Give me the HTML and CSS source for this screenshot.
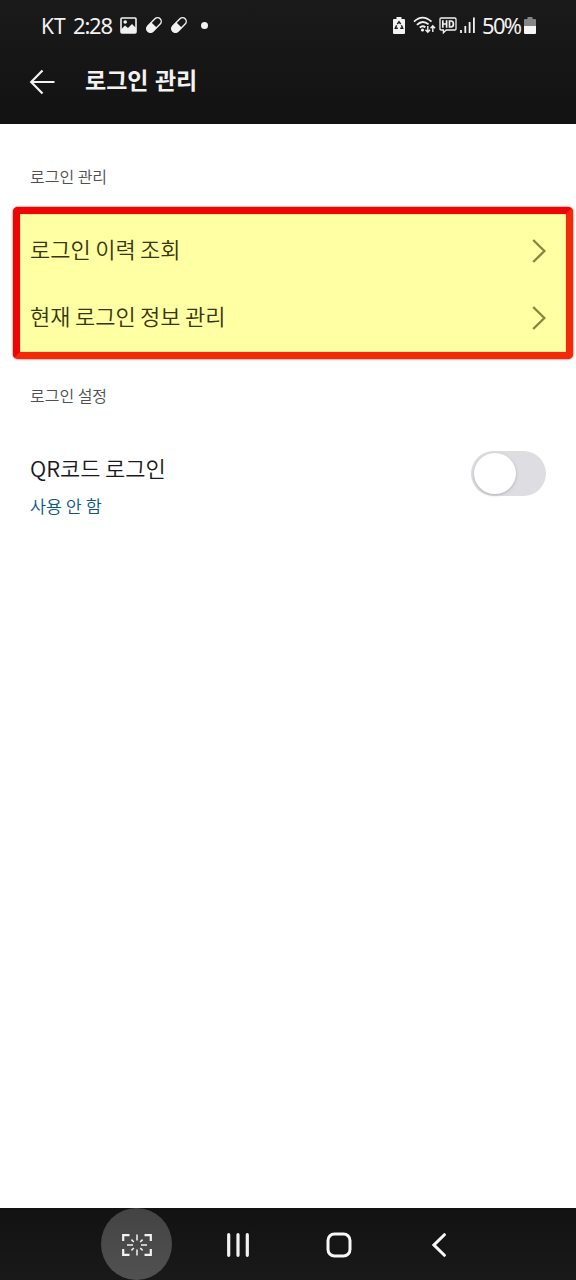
FILE: index.html
```html
<!DOCTYPE html>
<html lang="ko">
<head>
<meta charset="utf-8">
<title>로그인 관리</title>
<link rel="stylesheet" href="styles.css">
</head>
<body>
<div class="screen">
  <header class="top">
    <div class="status">
      <span class="carrier">KT</span>
      <span class="clock">2:28</span>
      <svg class="i-photo" width="17" height="17" viewBox="0 0 17 17"><rect x="1" y="1" width="15" height="15" rx="1" fill="none" stroke="#f2f2f2" stroke-width="1.6"/><path d="M1 12.5L5 8.5L8 11L12 7L16 11V16H1Z" fill="#f2f2f2"/><circle cx="5.2" cy="5" r="1.8" fill="#f2f2f2"/></svg>
      <svg class="i-pill" width="18" height="18" viewBox="0 0 18 18"><g transform="rotate(-45 9 9)"><rect x="0.3" y="5.3" width="17.4" height="7.4" rx="3.7" fill="none" stroke="#f2f2f2" stroke-width="1.4"/><path d="M9 5H4A4 4 0 0 0 4 13H9Z" fill="#f2f2f2"/></g></svg>
      <svg class="i-pill second" width="18" height="18" viewBox="0 0 18 18"><g transform="rotate(-45 9 9)"><rect x="0.3" y="5.3" width="17.4" height="7.4" rx="3.7" fill="none" stroke="#f2f2f2" stroke-width="1.4"/><path d="M9 5H4A4 4 0 0 0 4 13H9Z" fill="#f2f2f2"/></g></svg>
      <span class="dot"></span>
      <svg class="i-eco" width="12" height="17" viewBox="0 0 12 17"><path d="M3.5 0H8.5V2H11Q12 2 12 3V16Q12 17 11 17H1Q0 17 0 16V3Q0 2 1 2H3.5Z" fill="#f2f2f2"/><path d="M4.3 7.2L6 4.8L7.7 7.2M8.4 8.3L9.7 11.3H7.2M4.8 11.3H2.3L3.6 8.3" fill="none" stroke="#191919" stroke-width="1.4"/></svg>
      <svg class="i-wifi" width="23" height="18" viewBox="0 0 23 18"><g fill="none" stroke="#f2f2f2" stroke-width="1.8"><path d="M1 5.6Q9.5 -2.4 18.5 5.6"/><path d="M3.9 8.8Q9.5 3.4 15.6 8.4"/><path d="M6.8 11.6Q9.5 9 12.4 11.2"/></g><circle cx="9.5" cy="14" r="1.6" fill="#f2f2f2"/><path d="M14.8 10V16M12.5 13.8L14.8 16.2L17.1 13.8M19.8 16V10M17.6 12.2L19.8 9.8L22 12.2" fill="none" stroke="#f2f2f2" stroke-width="1.4"/></svg>
      <svg class="i-hd" width="18" height="17" viewBox="0 0 18 17"><path d="M2.2 1H15.8Q17 1 17 2.2V12Q17 13 15.8 13H7.2L4.4 15.8V13H2.2Q1 13 1 12V2.2Q1 1 2.2 1Z" fill="none" stroke="#f2f2f2" stroke-width="1.3"/><path d="M3.8 3.2V10.8M7.6 3.2V10.8M3.8 7H7.6M10.5 4V10H12Q14.4 10 14.4 7Q14.4 4 12 4Z" fill="none" stroke="#f2f2f2" stroke-width="1.7"/></svg>
      <svg class="i-signal" width="15" height="16" viewBox="0 0 15 16"><path d="M1 13V16M5.3 9V16M9.6 5V16M13.9 .6V16" fill="none" stroke="#f2f2f2" stroke-width="1.8"/></svg>
      <span class="percent">50%</span>
      <svg class="i-battery" width="12" height="17" viewBox="0 0 12 17"><path d="M3.5 0H8.5V2H11Q12 2 12 3V9H0V3Q0 2 1 2H3.5Z" fill="#858585"/><path d="M0 9H12V16Q12 17 11 17H1Q0 17 0 16Z" fill="#f6f6f6"/></svg>
    </div>
    <div class="appbar">
      <svg class="back" width="26" height="26" viewBox="0 0 26 26"><path d="M13.5 1.5L2.2 13L13.5 24.5M2.5 13H25.5" fill="none" stroke="#f2f2f2" stroke-width="2.2"/></svg>
      <h1 class="title">로그인 관리</h1>
    </div>
  </header>
  <main class="content">
    <h2 class="label">로그인 관리</h2>
    <div class="highlight">
      <div class="row"><span class="row-text">로그인 이력 조회</span><svg width="14" height="24" viewBox="0 0 14 24"><path d="M1.2 1L12.4 12L1.2 23" fill="none" stroke="#87873c" stroke-width="2.4"/></svg></div>
      <div class="row"><span class="row-text">현재 로그인 정보 관리</span><svg width="14" height="24" viewBox="0 0 14 24"><path d="M1.2 1L12.4 12L1.2 23" fill="none" stroke="#87873c" stroke-width="2.4"/></svg></div>
    </div>
    <h2 class="label settings">로그인 설정</h2>
    <div class="qr">
      <div>
        <div class="qr-name">QR코드 로그인</div>
        <div class="qr-state">사용 안 함</div>
      </div>
      <div class="toggle"><div class="knob"></div></div>
    </div>
  </main>
  <nav class="nav">
    <div class="capture"><svg width="30" height="22" viewBox="0 0 30 22"><path d="M1.2 7V1.2H7.5M22.5 1.2H28.8V7M28.8 15V20.8H22.5M7.5 20.8H1.2V15" fill="none" stroke="#f2f2f2" stroke-width="2.2"/><path d="M15 .5V6.5M15 15.5V21.5M5 11H11M19 11H25M9.4 5.6L11.8 8M20.6 5.6L18.2 8M9.4 16.4L11.8 14M20.6 16.4L18.2 14" fill="none" stroke="#f2f2f2" stroke-width="1.5"/></svg></div>
    <svg class="recents" width="22" height="24" viewBox="0 0 22 24"><path d="M1.7 1.7V22.3M11 1.7V22.3M20.3 1.7V22.3" stroke="#f2f2f2" stroke-width="3.2" stroke-linecap="round"/></svg>
    <svg class="home" width="26" height="26" viewBox="0 0 26 26"><rect x="2" y="2" width="22" height="22" rx="6.5" fill="none" stroke="#f7f7f7" stroke-width="3"/></svg>
    <svg class="nav-back" width="14" height="24" viewBox="0 0 14 24"><path d="M12.4 1.7L2 12L12.4 22.3" fill="none" stroke="#f7f7f7" stroke-width="3" stroke-linecap="round"/></svg>
  </nav>
</div>
</body>
</html>
```
FILE: styles.css
```css
* { box-sizing: border-box; }
body { margin: 0; background: #fff; font-family: "Noto Sans CJK KR", sans-serif; }
svg { display: block; flex: none; }
.screen { width: 576px; height: 1280px; display: flex; flex-direction: column; overflow: hidden; }
.top { height: 124px; flex: none; background: linear-gradient(#1a1a1a, #121212); color: #f2f2f2; }
.status { height: 50px; display: flex; align-items: center; padding-left: 41px; white-space: nowrap; font: 22px/50px "Noto Sans", sans-serif; }
.carrier { width: 32px; font-size: 21px; padding-top: 1px; }
.clock { width: 48px; letter-spacing: -1.2px; }
.i-photo { margin-left: -1px; }
.i-pill { margin-left: 8px; }
.i-pill.second { margin-left: 7px; }
.dot { width: 7px; height: 7px; margin-left: 13px; border-radius: 50%; background: #f2f2f2; }
.i-eco { margin-left: 185px; }
.i-wifi { margin-left: 8px; }
.i-hd { margin-left: 3px; }
.i-signal { margin-left: 3px; }
.percent { width: 42px; margin-left: 7px; letter-spacing: -1.7px; }
.appbar { height: 62px; display: flex; align-items: center; padding-left: 29px; }
.back { margin-top: 1px; }
.title { margin: -5px 0 0 30px; font-size: 23px; font-weight: 700; line-height: 34px; }
.content { flex: 1; padding: 40px 3px 0 13px; }
.label { margin: 0; padding-left: 17px; font-size: 16px; line-height: 24px; font-weight: 350; word-spacing: -1px; color: #505050; }
.highlight { height: 152px; margin-top: 19px; padding-top: 3px; border: 7px solid #f32a09; border-top-color: #ee0505; border-left-color: #ee0505; border-radius: 5px; background: #ffffa4; box-shadow: inset 0 0 1px #b33, 0 0 2px #b00000; }
.row { height: 67px; display: flex; align-items: center; justify-content: space-between; padding: 0 20px 0 10px; font-size: 22px; font-weight: 350; color: #36360c; }
.row-text { padding-bottom: 5px; word-spacing: -1.7px; }
.label.settings { margin-top: 24px; }
.qr { display: flex; justify-content: space-between; margin-top: 44px; padding: 0 27px 0 17px; }
.qr-name { margin-top: -2px; font-size: 22px; line-height: 36px; font-weight: 350; word-spacing: -1.7px; color: #1a1a1a; }
.qr-state { margin-top: 8px; font-size: 17.4px; line-height: 26px; font-weight: 350; word-spacing: -1px; color: #0c5687; }
.toggle { width: 75px; height: 45px; padding: 2px 3px; border-radius: 23px; background: #dedde2; }
.knob { width: 42px; height: 41px; border-radius: 50%; background: #fff; box-shadow: 0 1px 3px #8888; }
.nav { height: 72px; flex: none; display: flex; align-items: center; background: linear-gradient(#121212, #191919); padding-left: 101px; }
.capture { width: 71px; height: 72px; padding-top: 2px; border-radius: 50%; background: linear-gradient(#434343, #515151); display: flex; align-items: center; justify-content: center; }
.recents { margin: 2px 0 0 55px; }
.home { margin: 2px 0 0 77px; }
.nav-back { margin: 2px 0 0 80px; }
```
